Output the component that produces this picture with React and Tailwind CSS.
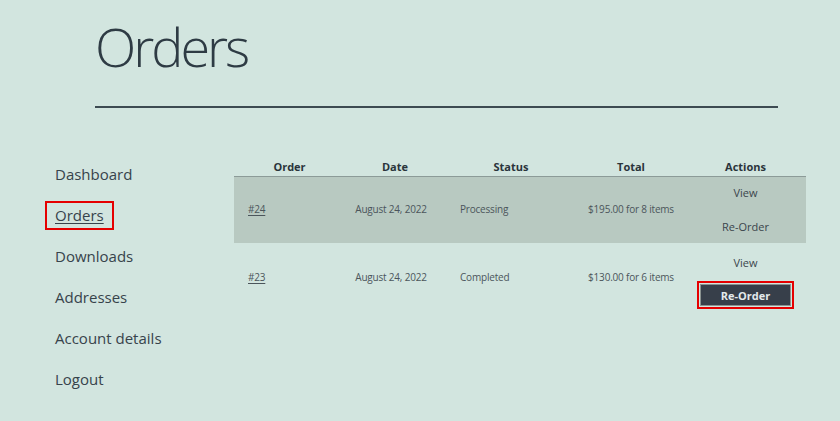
export default function App() {
  const orders = [
    { id: "#24", date: "August 24, 2022", status: "Processing", total: "$195.00 for 8 items", shaded: true },
    { id: "#23", date: "August 24, 2022", status: "Completed", total: "$130.00 for 6 items", shaded: false },
  ];
  const menu = ["Dashboard", "Orders", "Downloads", "Addresses", "Account details", "Logout"];

  return (
    <div className="w-[840px] h-[421px] overflow-hidden bg-[#d2e5df] text-[#333f47]" style={{ fontFamily: '"Open Sans", "Noto Sans", sans-serif' }}>
      <div className="pl-[95px] pr-[62px] pt-[14px]">
        <h1 className="text-[54px] leading-[64px] font-light tracking-[-3px] text-[#2e3b44]">Orders</h1>
        <div className="mt-[28px] border-b-2 border-[#3d4b52]" />
      </div>

      <div className="flex mt-[50px]">
        <nav className="w-[234px] pl-[45px] pt-[2px] flex flex-col gap-[13px]">
          {menu.map((m) => (
            <div key={m} className="h-[28px] flex items-center">
              {m === "Orders" ? (
                <span className="border-2 border-[#e50000] px-[8px] h-[29px] flex items-center underline underline-offset-2 text-[15px] text-[#37434b]">
                  {m}
                </span>
              ) : (
                <span className="pl-[10px] text-[15px] text-[#37434b]">{m}</span>
              )}
            </div>
          ))}
        </nav>

        <table className="w-[572px] table-fixed border-collapse text-[10px] tracking-[-0.2px] text-[#4b555b] self-start">
          <thead>
            <tr className="border-b border-[#8c9b98] text-[11px] tracking-normal font-bold text-[#2a343b]">
              <th className="w-[111px] h-[18px] font-bold">Order</th>
              <th className="w-[100px] font-bold">Date</th>
              <th className="w-[132px] font-bold">Status</th>
              <th className="w-[108px] font-bold">Total</th>
              <th className="w-[121px] font-bold">Actions</th>
            </tr>
          </thead>
          <tbody>
            {orders.map((o) => (
              <tr key={o.id} className={o.shaded ? "bg-[#b8c9c1] h-[67px]" : "h-[68px]"}>
                <td className="pl-[14px]">
                  <a className="underline underline-offset-2 text-[#4b555b]">{o.id}</a>
                </td>
                <td className="text-center pr-[8px]">{o.date}</td>
                <td className="pl-[15px]">{o.status}</td>
                <td className="text-center">{o.total}</td>
                <td className="text-center text-[11px] tracking-normal text-[#3b454c]">
                  {o.shaded ? (
                    <div className="flex flex-col items-center gap-[14px]">
                      <span className="leading-[20px]">View</span>
                      <span className="leading-[20px]">Re-Order</span>
                    </div>
                  ) : (
                    <div className="flex flex-col items-center gap-[8px] pt-[8px]">
                      <span className="leading-[20px]">View</span>
                      <span className="border-2 border-[#e50000] p-[1px]">
                        <span className="block w-[91px] h-[22px] leading-[22px] bg-[#373f4a] border border-[#8a9290] text-[#e4eaec] font-bold">
                          Re-Order
                        </span>
                      </span>
                    </div>
                  )}
                </td>
              </tr>
            ))}
          </tbody>
        </table>
      </div>
    </div>
  );
}
